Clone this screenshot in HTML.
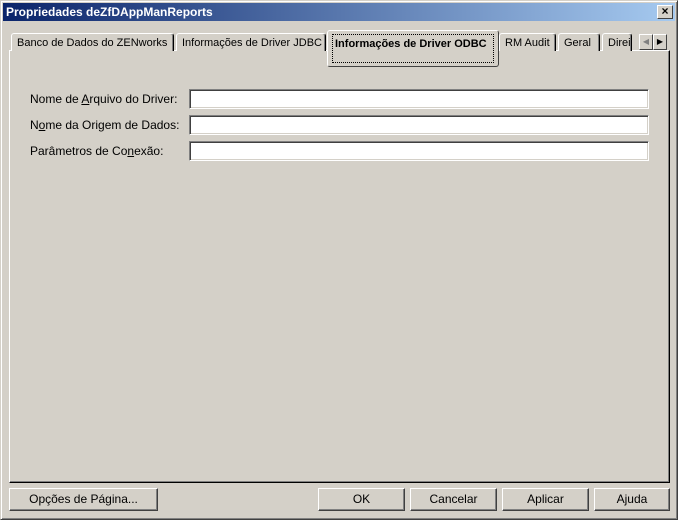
<!DOCTYPE html>
<html><head><style>
*{box-sizing:border-box;margin:0;padding:0}
body{width:678px;height:520px;background:#d4d0c8;font-family:"Liberation Sans",sans-serif;font-size:11px;color:#000;position:relative;overflow:hidden}
.abs{position:absolute}
.win{left:0;top:0;width:678px;height:520px;border:1px solid;border-color:#d4d0c8 #404040 #404040 #d4d0c8;box-shadow:inset 1px 1px #fff,inset -1px -1px #808080}
.title{left:3px;top:3px;width:672px;height:18px;background:linear-gradient(to right,#0a246a,#a6caf0);color:#fff;font-weight:bold;font-size:12px;line-height:18px;padding-left:3px}
.close{left:657px;top:5px;width:16px;height:14px;background:#d4d0c8;border:1px solid;border-color:#fff #404040 #404040 #fff;font-size:12px;line-height:11px;text-align:center;color:#000;font-weight:bold}
.panel{left:9px;top:50px;width:661px;height:433px;border:1px solid;border-color:#fff #000 #000 #fff;box-shadow:inset -1px -1px #808080}
.tab{top:33px;height:18px;border:1px solid;border-bottom:none;border-color:#fff #000 #000 #fff;border-radius:3px 3px 0 0;box-shadow:inset -1px 0 #808080;line-height:18px;padding-left:5px;white-space:nowrap;overflow:hidden;background:#d4d0c8}
.sel{left:327px;top:30px;width:172px;height:37px;border:1px solid;border-color:#fff #404040 #404040 #fff;border-radius:3px;background:#d4d0c8;font-weight:bold;padding:3px 4px}
.sel div{border:1px dotted #000;height:29px;padding-left:2px;padding-top:2px;line-height:14px}
.lbl{left:30px;font-size:12px}
.inp{left:189px;width:460px;height:20px;background:#fff;border:1px solid;border-color:#808080 #fff #fff #808080;box-shadow:inset 1px 1px #404040,inset -1px -1px #d4d0c8}
.btn{top:488px;height:23px;border:1px solid;border-color:#fff #404040 #404040 #fff;box-shadow:inset -1px -1px #808080;text-align:center;line-height:21px;font-size:12px}
.arr{top:34px;width:14px;height:16px;border:1px solid;border-color:#fff #404040 #404040 #fff;font-size:8px;line-height:14px;text-align:center}
</style></head><body>
<div class="abs win"></div>
<div class="abs title">Propriedades deZfDAppManReports</div>
<div class="abs close">×</div>
<div class="abs panel"></div>
<div class="abs tab" style="left:11px;width:163px">Banco de Dados do ZENworks</div>
<div class="abs tab" style="left:176px;width:150px">Informações de Driver JDBC</div>
<div class="abs tab" style="left:499px;width:57px">RM Audit</div>
<div class="abs tab" style="left:558px;width:42px">Geral</div>
<div class="abs tab" style="left:602px;width:30px">Direi</div>
<div class="abs arr" style="left:639px;color:#808080">◀</div>
<div class="abs arr" style="left:653px">▶</div>
<div class="abs sel"><div>Informações de Driver ODBC</div></div>
<div class="abs lbl" style="top:92px">Nome de <u>A</u>rquivo do Driver:</div>
<div class="abs lbl" style="top:118px">N<u>o</u>me da Origem de Dados:</div>
<div class="abs lbl" style="top:144px">Parâmetros de Co<u>n</u>exão:</div>
<div class="abs inp" style="top:89px"></div>
<div class="abs inp" style="top:115px"></div>
<div class="abs inp" style="top:141px"></div>
<div class="abs btn" style="left:9px;width:149px">Opções de Pá<u>g</u>ina...</div>
<div class="abs btn" style="left:318px;width:87px">OK</div>
<div class="abs btn" style="left:410px;width:87px">Cancelar</div>
<div class="abs btn" style="left:502px;width:87px">Aplicar</div>
<div class="abs btn" style="left:594px;width:76px">Ajuda</div>
</body></html>
